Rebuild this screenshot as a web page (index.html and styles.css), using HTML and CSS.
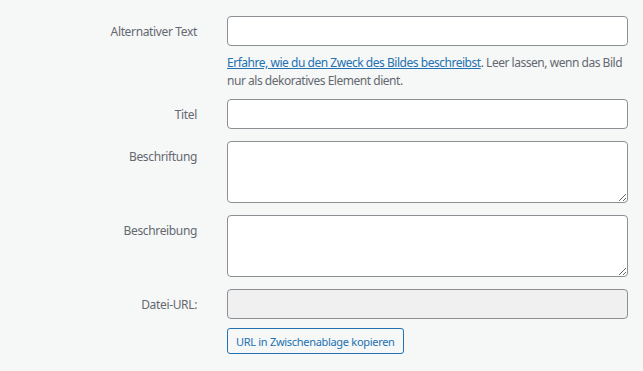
FILE: index.html
```html
<!DOCTYPE html>
<html lang="de">
<head>
<meta charset="utf-8">
<title>Anhang-Details</title>
<link rel="stylesheet" href="styles.css">
</head>
<body>
<div class="settings">
  <div class="setting">
    <label class="name" for="alt">Alternativer Text</label>
    <div class="field">
      <input class="input" id="alt" type="text">
      <p class="desc"><a href="#">Erfahre, wie du den Zweck des Bildes beschreibst</a>. Leer lassen, wenn das Bild nur als dekoratives Element dient.</p>
    </div>
  </div>
  <div class="setting">
    <label class="name" for="title">Titel</label>
    <div class="field"><input class="input" id="title" type="text"></div>
  </div>
  <div class="setting">
    <label class="name" for="caption">Beschriftung</label>
    <div class="field"><textarea class="area" id="caption"></textarea></div>
  </div>
  <div class="setting">
    <label class="name" for="descr">Beschreibung</label>
    <div class="field"><textarea class="area" id="descr"></textarea></div>
  </div>
  <div class="setting">
    <label class="name" for="url">Datei-URL:</label>
    <div class="field">
      <input class="input readonly" id="url" type="text" readonly>
      <button class="button" type="button">URL in Zwischenablage kopieren</button>
    </div>
  </div>
</div>
</body>
</html>
```
FILE: styles.css
```css
html, body {
  margin: 0;
  padding: 0;
  background: #f6f7f7;
}
body {
  font-family: "Noto Sans", "Open Sans", sans-serif;
  font-size: 12px;
  letter-spacing: -0.35px;
  color: #646970;
}
.settings {
  padding-top: 16px;
  display: flex;
  flex-direction: column;
  gap: 12px;
}
.setting {
  display: grid;
  grid-template-columns: 197px 401px;
  column-gap: 30px;
}
.name {
  text-align: right;
  line-height: 18px;
  padding-top: 7px;
}
.field {
  display: flex;
  flex-direction: column;
  align-items: flex-start;
}
.input, .area {
  box-sizing: border-box;
  width: 401px;
  margin: 0;
  border: 1px solid #8c8f94;
  border-radius: 4px;
  background: #fff;
  font: inherit;
  color: #2c3338;
  padding: 0 8px;
}
.input {
  height: 30px;
}
.area {
  height: 62px;
  display: block;
  padding: 4px 8px;
  resize: vertical;
}
.readonly {
  background: #f0f0f1;
}
.desc {
  margin: 8px 0 -3px;
  line-height: 18px;
  letter-spacing: -0.47px;
}
.desc a {
  color: #2271b1;
}
.button {
  margin-top: 9px;
  box-sizing: border-box;
  height: 26px;
  padding: 0 8px;
  border: 1px solid #2271b1;
  border-radius: 3px;
  background: #f6f7f7;
  color: #2271b1;
  font-family: inherit;
  font-size: 11px;
  letter-spacing: -0.3px;
  cursor: pointer;
}
```
